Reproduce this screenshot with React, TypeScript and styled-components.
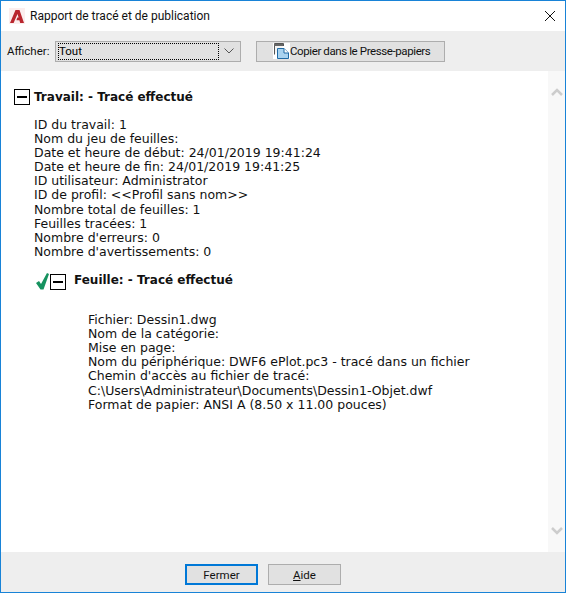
import React from "react"
import styled, { createGlobalStyle } from "styled-components"

const GlobalStyle = createGlobalStyle`
  html, body {
    margin: 0;
    padding: 0;
    background: #fff;
  }
`

const jobLines = [
  "ID du travail: 1",
  "Nom du jeu de feuilles:",
  "Date et heure de début: 24/01/2019 19:41:24",
  "Date et heure de fin: 24/01/2019 19:41:25",
  "ID utilisateur: Administrator",
  "ID de profil: <<Profil sans nom>>",
  "Nombre total de feuilles: 1",
  "Feuilles tracées: 1",
  "Nombre d'erreurs: 0",
  "Nombre d'avertissements: 0",
]

const sheetLines = [
  "Fichier: Dessin1.dwg",
  "Nom de la catégorie:",
  "Mise en page:",
  "Nom du périphérique: DWF6 ePlot.pc3 - tracé dans un fichier",
  "Chemin d'accès au fichier de tracé:",
  "C:\\Users\\Administrateur\\Documents\\Dessin1-Objet.dwf",
  "Format de papier: ANSI A (8.50 x 11.00 pouces)",
]

const AppLogo = () => (
  <svg width="16" height="16" viewBox="0 0 16 16">
    <rect width="16" height="16" fill="#fbeeee" />
    <path d="M1 15 L6.5 2 H10.5 L15 15 H11.2 L10.4 12.3 H7.4 L8.3 9.6 H9.6 L8.5 6 L4.6 15 Z" fill="#b9262e" />
  </svg>
)

const CloseIcon = () => (
  <svg width="12" height="12" viewBox="0 0 12 12">
    <path d="M1 1 L11 11 M11 1 L1 11" stroke="#111" strokeWidth="1" fill="none" />
  </svg>
)

const Chevron = ({ up }: { up?: boolean }) => (
  <svg width="12" height="9" viewBox="0 0 12 9">
    <path d={up ? "M1 8 L6 3 L11 8" : "M1 1 L6 6 L11 1"} stroke="#cdcdcd" strokeWidth="2.5" fill="none" />
  </svg>
)

const ComboArrow = () => (
  <svg width="10" height="6" viewBox="0 0 10 6">
    <path d="M0.5 0.5 L5 5 L9.5 0.5" stroke="#555" strokeWidth="1" fill="none" />
  </svg>
)

const ClipboardIcon = () => (
  <CopyIconSvg width="17" height="16" viewBox="0 0 17 16">
    <rect width="17" height="16" fill="#fff" />
    <path d="M1.5 11.5 V0.5 H10.5 V3" fill="#f4f4f4" stroke="#555" />
    <rect x="1" y="1" width="9" height="2" fill="#666" />
    <path d="M4.5 5.5 H11 L15.5 10 V15.5 H4.5 Z" fill="#a9d3f0" stroke="#1f6aa5" />
    <path d="M11 5.5 V10 H15.5" fill="#fff" stroke="#1f6aa5" />
  </CopyIconSvg>
)

const CheckIcon = () => (
  <svg width="14" height="17" viewBox="0 0 14 17">
    <path d="M0 10 L3 8 L5 11 L11 0 L13 1 L7.5 16.5 H4.5 Z" fill="#16925f" />
  </svg>
)

const App = () => (
  <>
    <GlobalStyle />
    <Dialog>
      <TitleBar>
        <AppLogo />
        <Title>Rapport de tracé et de publication</Title>
        <CloseButton>
          <CloseIcon />
        </CloseButton>
      </TitleBar>

      <Toolbar>
        <FieldLabel>Afficher:</FieldLabel>
        <Combo>
          <ComboValue>Tout</ComboValue>
          <ComboButton>
            <ComboArrow />
          </ComboButton>
        </Combo>
        <CopyButton>
          <ClipboardIcon />
          Copier dans le Presse-papiers
        </CopyButton>
      </Toolbar>

      <Body>
        <Report>
          <JobHeading>
            <ToggleBox />
            <Heading>Travail: - Tracé effectué</Heading>
          </JobHeading>
          <JobDetails>
            {jobLines.map((line) => (
              <Line key={line}>{line}</Line>
            ))}
          </JobDetails>
          <SheetHeading>
            <CheckIcon />
            <ToggleBox />
            <SheetTitle>Feuille: - Tracé effectué</SheetTitle>
          </SheetHeading>
          <SheetDetails>
            {sheetLines.map((line) => (
              <Line key={line}>{line}</Line>
            ))}
          </SheetDetails>
        </Report>
        <ScrollTrack>
          <Chevron up />
          <Chevron />
        </ScrollTrack>
      </Body>

      <Footer>
        <DialogButton $primary>Fermer</DialogButton>
        <DialogButton>
          <u>A</u>ide
        </DialogButton>
      </Footer>
    </Dialog>
  </>
)

export default App

const Dialog = styled.div`
  box-sizing: border-box;
  width: 566px;
  height: 593px;
  display: flex;
  flex-direction: column;
  border: 1px solid #1883d7;
  background: #fff;
  overflow: hidden;
  font-family: Roboto, "Liberation Sans", sans-serif;
  color: #000;
`

const TitleBar = styled.div`
  flex: 0 0 30px;
  display: flex;
  align-items: center;
  padding: 0 9px 0 8px;
  gap: 5px;
`

const Title = styled.div`
  flex: 1;
  font-size: 12px;
  color: #111;
`

const CloseButton = styled.div`
  display: flex;
  align-items: center;
`

const Toolbar = styled.div`
  flex: 0 0 40px;
  display: flex;
  align-items: center;
  background: #eeeeee;
  padding-left: 6px;
`

const FieldLabel = styled.div`
  width: 48px;
  font-size: 11.5px;
  color: #111;
`

const Combo = styled.div`
  box-sizing: border-box;
  width: 186px;
  height: 21px;
  display: flex;
  align-items: center;
  padding: 2px;
  background: #e1e1e1;
  border: 1px solid #adadad;
`

const ComboValue = styled.div`
  flex: 1;
  height: 15px;
  line-height: 15px;
  font-size: 11.5px;
  border: 1px dotted #000;
`

const ComboButton = styled.div`
  flex: 0 0 19px;
  display: flex;
  justify-content: center;
`

const CopyButton = styled.div`
  box-sizing: border-box;
  width: 189px;
  height: 21px;
  margin-left: 15px;
  padding-left: 16px;
  display: flex;
  align-items: center;
  background: #e1e1e1;
  border: 1px solid #adadad;
  font-size: 11.5px;
  letter-spacing: -0.4px;
  color: #111;
  white-space: nowrap;
`

const CopyIconSvg = styled.svg`
  flex: 0 0 17px;
`

const Body = styled.div`
  flex: 1;
  min-height: 0;
  display: flex;
`

const Report = styled.div`
  flex: 1;
  padding: 18px 0 0 13px;
  font-family: "DejaVu Sans", sans-serif;
  font-size: 12.5px;
  line-height: 14.1px;
  color: #111;
`

const JobHeading = styled.div`
  display: flex;
  align-items: center;
  gap: 4px;
`

const Heading = styled.div`
  font-size: 12px;
  font-weight: 700;
`

const ToggleBox = styled.div`
  box-sizing: border-box;
  position: relative;
  flex: 0 0 16px;
  width: 16px;
  height: 16px;
  border: 1px solid #000;
  background: #fff;

  &::after {
    content: "";
    position: absolute;
    left: 2px;
    top: 6px;
    width: 10px;
    height: 2px;
    background: #000;
  }
`

const JobDetails = styled.div`
  margin: 13px 0 0 20px;
`

const SheetHeading = styled.div`
  display: flex;
  align-items: center;
  margin: 14px 0 0 22px;
`

const SheetTitle = styled(Heading)`
  margin: 0 0 4px 8px;
`

const SheetDetails = styled.div`
  margin: 22px 0 0 74px;
`

const Line = styled.div`
  white-space: nowrap;
`

const ScrollTrack = styled.div`
  flex: 0 0 17px;
  display: flex;
  flex-direction: column;
  align-items: center;
  justify-content: space-between;
  padding: 16px 0 16px;
  background: #f8f8f8;
`

const Footer = styled.div`
  flex: 0 0 40px;
  display: flex;
  gap: 10px;
  padding: 12px 0 0 184px;
  box-sizing: border-box;
  background: #eeeeee;
`

const DialogButton = styled.div<{ $primary?: boolean }>`
  box-sizing: border-box;
  width: 73px;
  height: 21px;
  display: flex;
  align-items: center;
  justify-content: center;
  background: #e1e1e1;
  border: ${(p) => (p.$primary ? "2px solid #0078d7" : "1px solid #adadad")};
  font-size: 11.5px;
  color: #111;

  u {
    text-underline-offset: 1px;
  }
`
